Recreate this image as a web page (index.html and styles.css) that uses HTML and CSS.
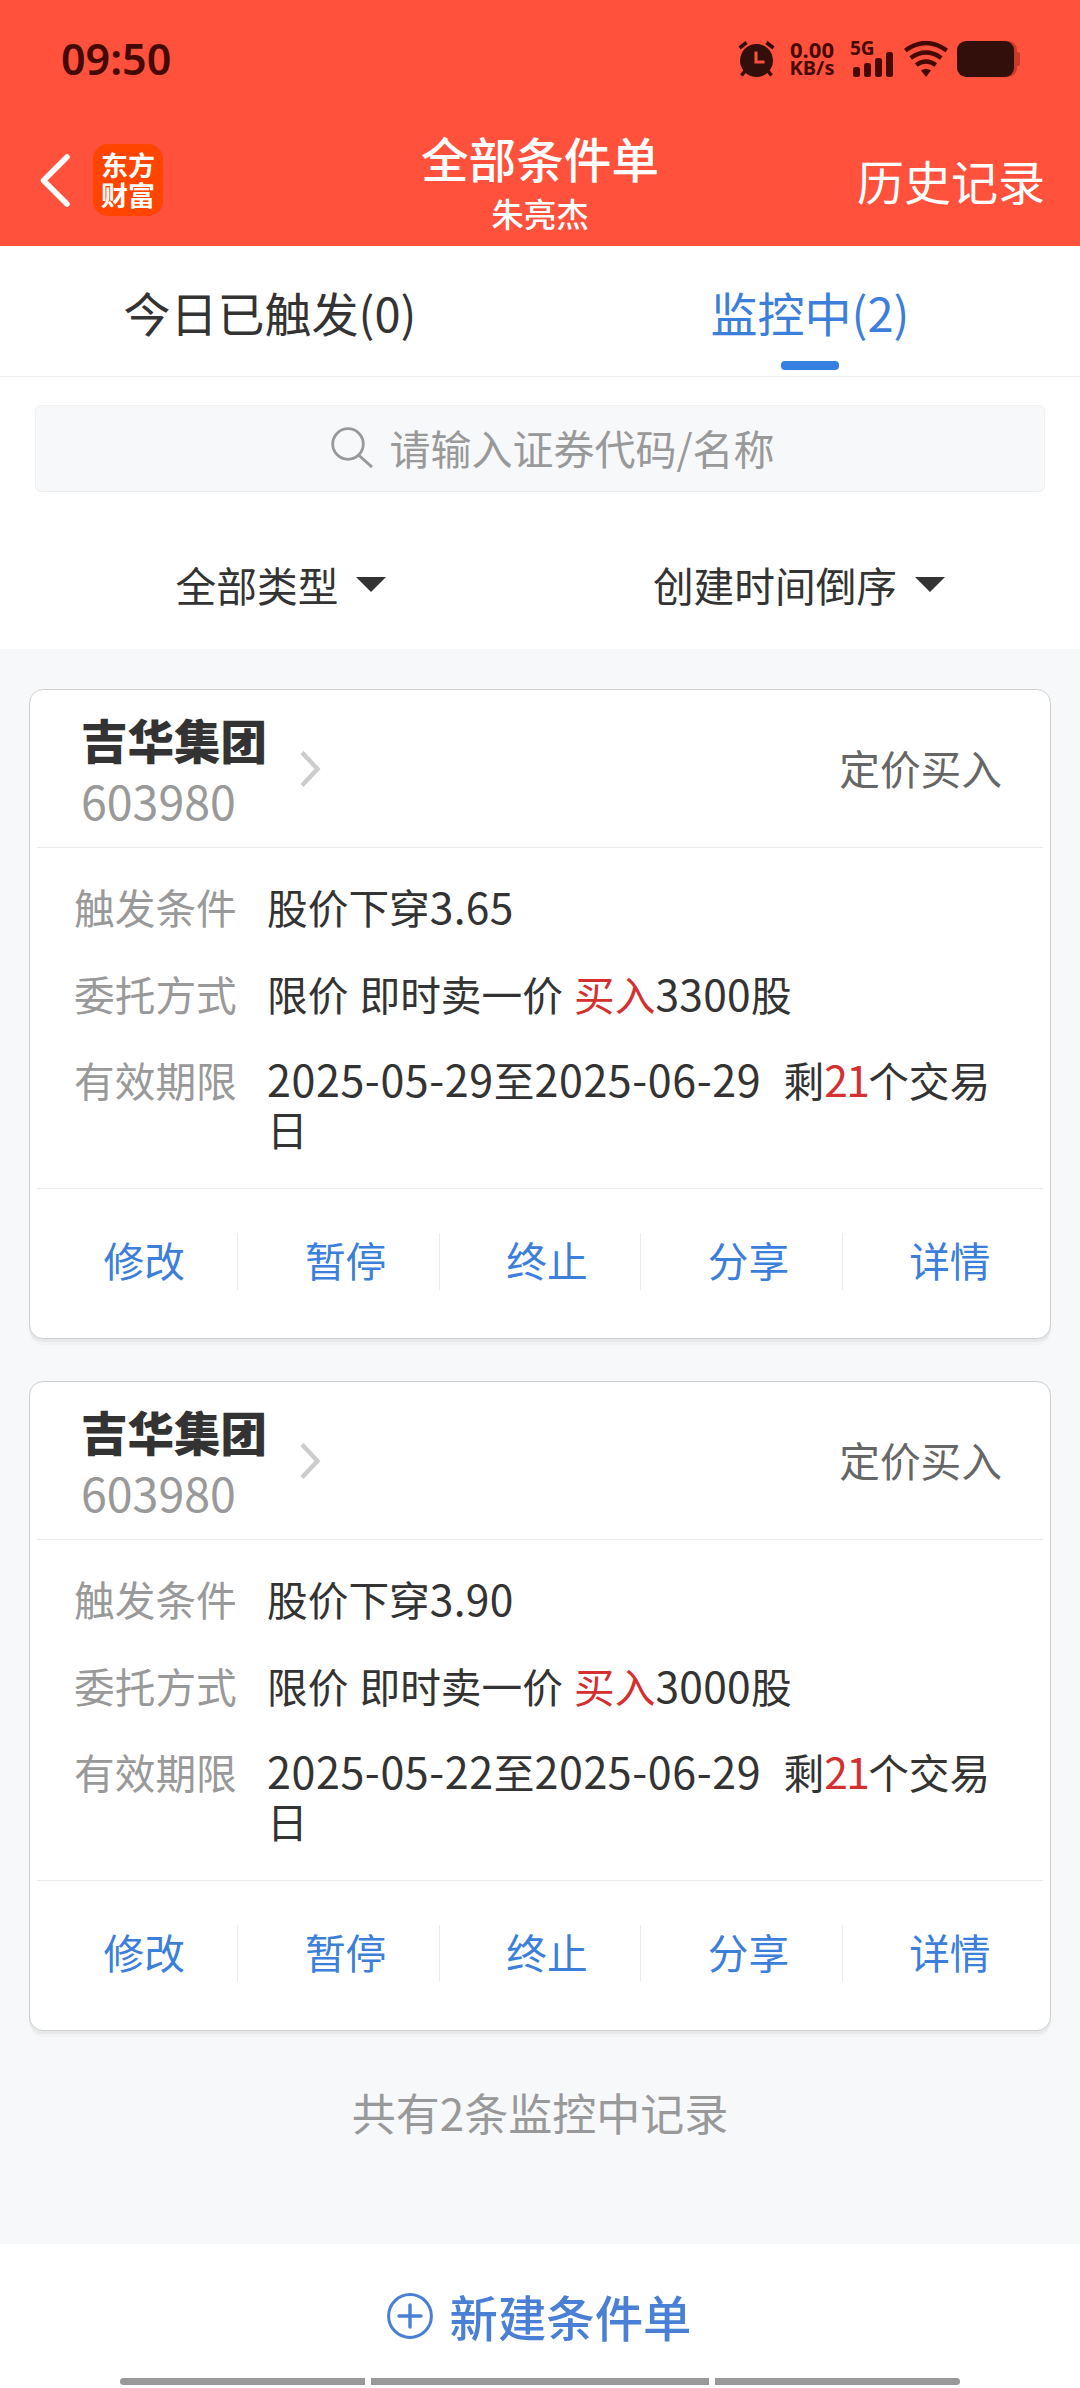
FILE: index.html
```html
<!DOCTYPE html>
<html lang="zh-CN">
<head>
  <meta charset="UTF-8">
  <title>全部条件单</title>
  <link rel="stylesheet" href="styles.css">
</head>
<body>

  <header class="header">
    <div class="status-bar">
      <span class="time">09:50</span>
      <div class="status-icons">
        <svg class="alarm" width="37" height="36" viewBox="0 0 37 36">
          <circle cx="18.5" cy="19.5" r="16.5" fill="#330f0b"/>
          <path d="M1.5 7 L8.5 1.5 M35.5 7 L28.5 1.5 M7 30 L3.5 34.5 M30 30 L33.5 34.5" stroke="#330f0b" stroke-width="3.6" fill="none"/>
          <path d="M18 10.5 V21 H26.5" stroke="#ff513b" stroke-width="3" fill="none"/>
        </svg>
        <div class="speed"><span>0.00</span><span class="unit">KB/s</span></div>
        <div class="signal">
          <span class="net">5G</span>
          <svg width="43" height="36" viewBox="0 0 43 36" fill="#450903">
            <rect x="3" y="26" width="7" height="10" rx="2.5"/>
            <rect x="14" y="22" width="7" height="14" rx="2.5"/>
            <rect x="25" y="17" width="7" height="19" rx="2.5"/>
            <rect x="36" y="11" width="7" height="25" rx="2.5"/>
          </svg>
        </div>
        <svg class="wifi" width="44" height="36" viewBox="0 0 44 36">
          <path d="M1.2 9.5 Q22 -5.5 42.8 9.5 M6.7 17 Q22 6 37.3 17 M12.2 24 Q22 17 31.8 24" stroke="#450903" stroke-width="4.4" fill="none"/>
          <path d="M17 29.5 Q22 26 27 29.5 L22 36 Z" fill="#450903"/>
        </svg>
        <svg width="63" height="36" viewBox="0 0 63 36">
          <rect x="4" y="0" width="56" height="36" rx="9" fill="#c83a2a"/>
          <rect x="58" y="11" width="5" height="14" rx="2.5" fill="#c83a2a"/>
          <rect width="57" height="36" rx="9" fill="#330f0b"/>
        </svg>
      </div>
    </div>
    <div class="nav">
      <div class="nav-left">
        <svg width="30" height="53" viewBox="0 0 30 53">
          <path d="M27 3 L3.5 26.5 L27 50" stroke="#fff" stroke-width="5.5" stroke-linecap="round" stroke-linejoin="round" fill="none"/>
        </svg>
        <div class="logo"><span>东方</span><span>财富</span></div>
      </div>
      <div class="nav-title">
        <h1>全部条件单</h1>
        <p>朱亮杰</p>
      </div>
      <a class="history">历史记录</a>
    </div>
  </header>

  <div class="tabs">
    <div class="tab">今日已触发(0)</div>
    <div class="tab active">监控中(2)</div>
  </div>

  <div class="search-wrap">
    <div class="search">
      <svg width="43" height="41" viewBox="0 0 43 41">
        <circle cx="17" cy="17" r="15.3" stroke="#999" stroke-width="2.8" fill="none"/>
        <path d="M27.5 28 L41 40" stroke="#999" stroke-width="3" fill="none"/>
      </svg>
      <span>请输入证券代码/名称</span>
    </div>
  </div>

  <div class="filters">
    <div class="filter">全部类型<i class="arrow"></i></div>
    <div class="filter">创建时间倒序<i class="arrow"></i></div>
  </div>

  <main class="list">
    <section class="card">
      <div class="card-head">
        <div class="stock">
          <h2>吉华集团</h2>
          <p>603980</p>
        </div>
        <svg class="more" width="22" height="38" viewBox="0 0 22 38">
          <path d="M3 2.5 L18.5 19 L3 35.5" stroke="#ccc" stroke-width="4.4" fill="none"/>
        </svg>
        <span class="type">定价买入</span>
      </div>
      <div class="card-body">
        <div class="row">
          <span class="label">触发条件</span>
          <span class="value">股价下穿<b>3.65</b></span>
        </div>
        <div class="row">
          <span class="label">委托方式</span>
          <span class="value">限价 即时卖一价 <em>买入</em><b>3300</b>股</span>
        </div>
        <div class="row">
          <span class="label">有效期限</span>
          <span class="value"><b class="date">2025-05-29</b>至<b class="date">2025-06-29</b>&nbsp; 剩<em><b>21</b></em>个交易日</span>
        </div>
      </div>
      <div class="actions">
        <a>修改</a>
        <a>暂停</a>
        <a>终止</a>
        <a>分享</a>
        <a>详情</a>
      </div>
    </section>

    <section class="card">
      <div class="card-head">
        <div class="stock">
          <h2>吉华集团</h2>
          <p>603980</p>
        </div>
        <svg class="more" width="22" height="38" viewBox="0 0 22 38">
          <path d="M3 2.5 L18.5 19 L3 35.5" stroke="#ccc" stroke-width="4.4" fill="none"/>
        </svg>
        <span class="type">定价买入</span>
      </div>
      <div class="card-body">
        <div class="row">
          <span class="label">触发条件</span>
          <span class="value">股价下穿<b>3.90</b></span>
        </div>
        <div class="row">
          <span class="label">委托方式</span>
          <span class="value">限价 即时卖一价 <em>买入</em><b>3000</b>股</span>
        </div>
        <div class="row">
          <span class="label">有效期限</span>
          <span class="value"><b class="date">2025-05-22</b>至<b class="date">2025-06-29</b>&nbsp; 剩<em><b>21</b></em>个交易日</span>
        </div>
      </div>
      <div class="actions">
        <a>修改</a>
        <a>暂停</a>
        <a>终止</a>
        <a>分享</a>
        <a>详情</a>
      </div>
    </section>

    <p class="total">共有2条监控中记录</p>
  </main>

  <footer class="footer">
    <a class="create">
      <svg width="46" height="46" viewBox="0 0 46 46">
        <circle cx="23" cy="23" r="21.4" stroke="#4a7fd6" stroke-width="3" fill="none"/>
        <path d="M23 12 V34 M12 23 H34" stroke="#4a7fd6" stroke-width="3.4" stroke-linecap="round" fill="none"/>
      </svg>
      <span>新建条件单</span>
    </a>
    <div class="gesture">
      <span></span>
      <span class="mid"></span>
      <span></span>
    </div>
  </footer>

</body>
</html>
```
FILE: styles.css
```css
* {
  box-sizing: border-box;
}

body {
  margin: 0;
  width: 1080px;
  height: 2388px;
  display: flex;
  flex-direction: column;
  background: #f7f8fa;
  color: #333;
  font-family: 'Noto Sans CJK SC', sans-serif;
  font-size: 40.7px;
  overflow: hidden;
}

h1, h2, p {
  margin: 0;
}

svg {
  display: block;
  flex: none;
}

/* header */
.header {
  height: 246px;
  background: #ff513b;
  color: #fff;
}

.status-bar {
  height: 118px;
  display: flex;
  justify-content: space-between;
  padding: 0 60px 0 61px;
  color: #450903;
}

.time {
  font-family: 'Noto Sans', 'Noto Sans CJK SC', sans-serif;
  font-size: 43px;
  font-weight: 600;
  line-height: 118px;
}

.status-icons {
  display: flex;
  align-items: flex-start;
  padding-top: 41px;
}

.speed {
  width: 50px;
  height: 36px;
  margin-left: 12px;
  display: flex;
  flex-direction: column;
  align-items: center;
  font: 700 22px/16px 'Noto Sans', sans-serif;
}

.speed .unit {
  font-size: 20px;
  line-height: 21px;
}

.signal {
  position: relative;
  margin-left: 13px;
}

.net {
  position: absolute;
  left: 0;
  top: -1px;
  font: 700 19px/16px 'Noto Sans', sans-serif;
}

.wifi {
  margin: 0 9px 0 11px;
}

.nav {
  height: 128px;
  display: grid;
  grid-template-columns: 1fr auto 1fr;
  padding: 0 35px 0 40px;
}

.nav-left {
  display: flex;
  align-items: center;
  gap: 23px;
  height: 124px;
}

.logo {
  width: 70px;
  height: 72px;
  border-radius: 15px;
  background: #ff4500;
  display: flex;
  flex-direction: column;
  align-items: center;
  padding-top: 6px;
  font-size: 27px;
  font-weight: 700;
  line-height: 30px;
}

.nav-title {
  text-align: center;
  padding: 5px 5px 0 0;
}

.nav-title h1 {
  font-size: 47.6px;
  font-weight: 500;
  line-height: 70px;
}

.nav-title p {
  font-size: 32.5px;
  font-weight: 500;
  line-height: 40px;
}

.history {
  text-align: right;
  font-size: 47px;
  line-height: 124px;
}

/* tabs */
.tabs {
  height: 131px;
  display: flex;
  background: #fff;
  border-bottom: 1px solid #ebecee;
}

.tab {
  flex: 1;
  display: flex;
  flex-direction: column;
  align-items: center;
  font-size: 47px;
  line-height: 115px;
  padding-top: 8px;
}

.tab.active {
  color: #3c7fdb;
}

.tab.active::after {
  content: "";
  width: 58px;
  height: 9px;
  margin-top: -8px;
  border-radius: 4px;
  background: #3580e0;
}

/* search */
.search-wrap {
  padding: 28px 35px 0;
  background: #fff;
}

.search {
  height: 87px;
  display: flex;
  align-items: center;
  justify-content: center;
  gap: 15px;
  border: 1px solid #eeeff1;
  border-radius: 6px;
  background: #f7f8fa;
  color: #999;
  font-size: 41px;
  padding: 0 0 3px 26px;
}

/* filters */
.filters {
  height: 157px;
  display: flex;
  background: #fff;
  padding-top: 28px;
}

.filter {
  width: 562px;
  display: flex;
  align-items: center;
  justify-content: center;
  gap: 18px;
}

.filter + .filter {
  width: 514px;
  margin-left: -20px;
}

.arrow {
  border: 15px solid transparent;
  border-top-color: #333;
  border-bottom: 0;
}

/* cards */
.list {
  flex: 1;
  padding: 40px 29px 0;
}

.card {
  height: 650px;
  margin-bottom: 42px;
  padding: 0 7px;
  background: #fff;
  border: 1px solid #cfd0d2;
  border-radius: 14px;
  box-shadow: 0 3px 0 #e7e8ea, 0 7px 0 -1px #f1f2f4;
}

.card-head {
  height: 158px;
  display: flex;
  align-items: center;
  border-bottom: 1px solid #ebebeb;
  padding: 0 41px 0 44px;
}

.stock {
  width: 218px;
}

.stock h2 {
  font-size: 46.5px;
  font-weight: 900;
  line-height: 62px;
}

.stock p {
  font-size: 46.5px;
  line-height: 60px;
  color: #999;
}

.type {
  margin-left: auto;
  padding-bottom: 3px;
  color: #666;
}

.card-body {
  height: 341px;
  border-bottom: 1px solid #ebebeb;
  padding: 34px 38px 0 37px;
}

.row {
  display: flex;
  line-height: 49px;
  margin-bottom: 37.5px;
}

.label {
  width: 193px;
  color: #999;
}

.value {
  flex: 1;
  word-spacing: 2px;
}

.value b {
  font-size: 42.5px;
  font-weight: 400;
  line-height: 1;
  letter-spacing: 0.3px;
}

.value .date {
  font-size: 43px;
  letter-spacing: 0.6px;
}

.value em {
  font-style: normal;
  color: #d53030;
}

.value em b {
  letter-spacing: -1.6px;
}

.actions {
  display: flex;
  align-items: center;
  height: 145px;
}

.actions a {
  flex: 1;
  height: 57px;
  line-height: 53px;
  text-align: center;
  padding-left: 14px;
  color: #3c7fdb;
}

.actions a + a {
  border-left: 1px solid #ebebeb;
}

.total {
  text-align: center;
  font-size: 44px;
  line-height: 64px;
  padding-top: 7px;
  color: #999;
}

/* footer */
.footer {
  height: 144px;
  background: #fff;
}

.create {
  height: 134px;
  display: flex;
  align-items: center;
  justify-content: center;
  gap: 17px;
  padding: 10px 2px 0 0;
  font-size: 48.4px;
  font-weight: 500;
  color: #4a7fd6;
}

.gesture {
  display: flex;
  justify-content: center;
  gap: 6px;
}

.gesture span {
  width: 245px;
  height: 7px;
  background: #999;
}

.gesture .mid {
  width: 338px;
}

.gesture span:first-child {
  border-radius: 4px 0 0 4px;
}

.gesture span:last-child {
  border-radius: 0 4px 4px 0;
}
```
